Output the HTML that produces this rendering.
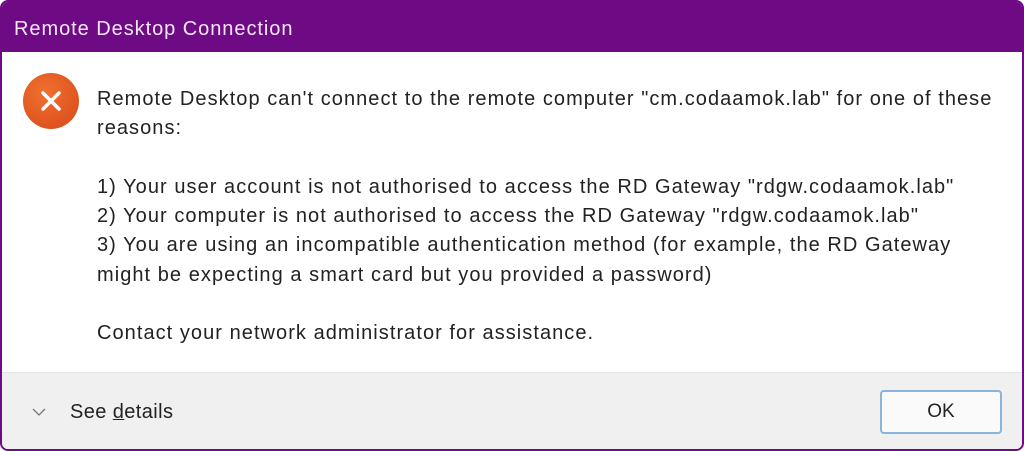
<!DOCTYPE html>
<html><head><style>
body{margin:0;width:1024px;height:451px;overflow:hidden;background:#fff;font-family:"Liberation Sans",sans-serif;}
.win{position:absolute;left:0;top:0;width:1020px;height:447px;border:2px solid #6e0a84;border-radius:8px;overflow:hidden;background:#fff;}
.title{position:absolute;left:0;top:0;width:100%;height:50px;background:#6e0a84;color:#f2e8f4;font-size:20px;letter-spacing:0.95px;line-height:54px;padding-left:12px;box-sizing:border-box;}
.icon{position:absolute;left:21px;top:71px;width:56px;height:56px;border-radius:50%;background:radial-gradient(circle at 40% 35%,#f0702e,#d8481a);}
.text{position:absolute;left:95px;top:83px;white-space:nowrap;font-size:20px;letter-spacing:1.05px;line-height:29.3px;color:#222;}
.foot{position:absolute;left:0;top:370px;width:100%;height:80px;background:#f0f0f0;border-top:1px solid #e6e6e6;}
.see{position:absolute;left:68px;top:28px;font-size:20px;letter-spacing:0.4px;color:#222;}
.chev{position:absolute;left:29px;top:34px;}
.ok{position:absolute;left:878px;top:17px;width:118px;height:40px;border:2px solid #8ab4dc;border-radius:4px;background:#fafafa;font-size:19px;text-align:center;line-height:40px;color:#222;}
</style></head><body>
<div class="win">
<div class="title">Remote Desktop Connection</div>
<div class="icon"><svg width="56" height="56"><path d="M20 20L36 36M36 20L20 36" stroke="#fff" stroke-width="3.5" stroke-linecap="round"/></svg></div>
<div class="text">Remote Desktop can't connect to the remote computer "cm.codaamok.lab" for one of these<br>reasons:<br><br>1) Your user account is not authorised to access the RD Gateway "rdgw.codaamok.lab"<br>2) Your computer is not authorised to access the RD Gateway "rdgw.codaamok.lab"<br>3) You are using an incompatible authentication method (for example, the RD Gateway<br>might be expecting a smart card but you provided a password)<br><br>Contact your network administrator for assistance.</div>
<div class="foot">
<svg class="chev" width="16" height="10"><path d="M2 2L8 8L14 2" stroke="#777" stroke-width="1.3" fill="none"/></svg>
<div class="see">See <u style="text-decoration-thickness:1px">d</u>etails</div>
<div class="ok">OK</div>
</div>
</div>
</body></html>
